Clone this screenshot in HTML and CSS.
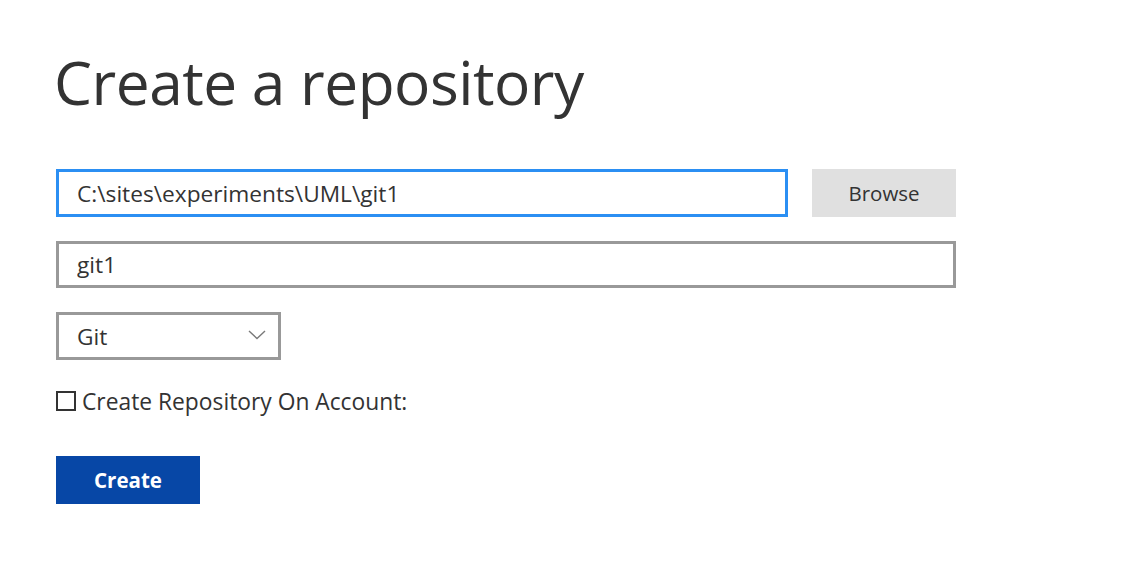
FILE: index.html
```html
<!DOCTYPE html>
<html>
<head>
<meta charset="utf-8">
<link rel="stylesheet" href="styles.css">
</head>
<body>
<main class="page">
  <h1 class="title">Create a repository</h1>
  <div class="row">
    <input class="field field-focus path" type="text" value="C:\sites\experiments\UML\git1">
    <button class="btn-browse" type="button">Browse</button>
  </div>
  <div class="row">
    <input class="field name" type="text" value="git1">
  </div>
  <div class="row">
    <div class="select">
      <span class="select-text">Git</span>
      <svg class="chev" width="18" height="10" viewBox="0 0 18 10"><path d="M1 1 L9 8.5 L17 1" fill="none" stroke="#7a7a7a" stroke-width="1.4"/></svg>
    </div>
  </div>
  <label class="check-row">
    <span class="box"></span>
    <span class="check-label">Create Repository On Account:</span>
  </label>
  <button class="btn-create" type="button">Create</button>
</main>
</body>
</html>
```
FILE: styles.css
```css
html, body {
  margin: 0;
  padding: 0;
  background: #fff;
}
body {
  font-family: "Open Sans", "Noto Sans", sans-serif;
  color: #333;
}
.page {
  padding: 44px 0 0 56px;
  display: flex;
  flex-direction: column;
  align-items: flex-start;
}
.title {
  margin: 0 0 0 -2px;
  font-size: 60.4px;
  font-weight: 400;
  line-height: 76px;
  color: #333;
  letter-spacing: -0.5px;
}
.row {
  display: flex;
  gap: 24px;
}
.row + .row { margin-top: 24px; }
.title + .row { margin-top: 49px; }
.field {
  box-sizing: border-box;
  height: 48px;
  border: 3px solid #999;
  padding: 0 0 0 18px;
  font-family: inherit;
  font-size: 22.7px;
  color: #333;
  background: #fff;
  outline: none;
  margin: 0;
}
.field-focus { border-color: #2b8ff3; }
.path { width: 732px; }
.name { width: 900px; height: 47px; }
.btn-browse {
  width: 144px;
  height: 48px;
  border: none;
  background: #e0e0e0;
  font-family: inherit;
  font-size: 20.5px;
  color: #333;
  margin: 0;
  padding: 0;
}
.select {
  box-sizing: border-box;
  width: 225px;
  height: 48px;
  border: 3px solid #999;
  display: flex;
  align-items: center;
  justify-content: space-between;
  padding: 0 12px 0 18px;
  font-size: 22.7px;
}
.chev { display: block; margin-top: -2px; }
.check-row {
  display: flex;
  align-items: center;
  gap: 6px;
  height: 30px;
  margin-top: 26px;
  font-size: 22.8px;
}
.box {
  box-sizing: border-box;
  width: 20px;
  height: 20px;
  border: 2px solid #333;
}
.btn-create {
  margin-top: 40px;
  width: 144px;
  height: 48px;
  border: none;
  background: #0747a6;
  color: #fff;
  font-family: inherit;
  font-weight: 700;
  font-size: 20.5px;
  padding: 0;
}
```
